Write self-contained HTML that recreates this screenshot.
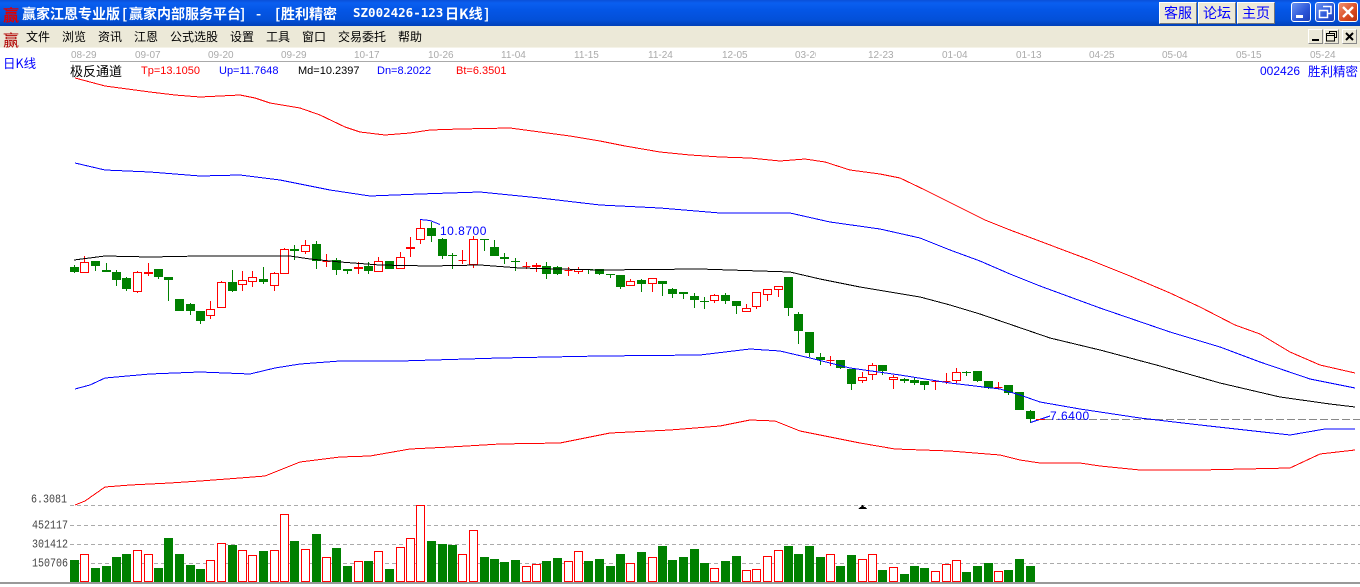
<!DOCTYPE html>
<html><head><meta charset="utf-8"><style>
html,body{margin:0;padding:0;background:#fff;width:1360px;height:587px;overflow:hidden}
body{position:relative;font-family:"Liberation Sans","WenQuanYi Zen Hei","Noto Sans CJK SC",sans-serif}
.a{position:absolute;white-space:pre;line-height:1}
#tb{position:absolute;left:0;top:0;width:1360px;height:26px;background:linear-gradient(#0a4fd8 0,#0a5ff0 3px,#0456e6 10px,#0350d8 20px,#0240b8 26px)}
#mb{position:absolute;left:0;top:26px;width:1360px;height:21px;background:#ECE9D8;border-bottom:1px solid #f5f3e8}
.t{color:#fff;font:bold 14px "WenQuanYi Zen Hei","Noto Sans CJK SC",sans-serif;top:4px}
.tm{color:#fff;font:bold 12.5px "DejaVu Sans Mono",monospace;top:5px}
.m{color:#000;font:12px "WenQuanYi Zen Hei","Noto Sans CJK SC",sans-serif;top:28px}
.b{position:absolute;top:2px;width:36px;height:20px;background:#ECE9D8;border:1px solid;border-color:#fff #777 #777 #fff;color:#00f;font:14px/20px "WenQuanYi Zen Hei","Noto Sans CJK SC",sans-serif;text-align:center}
.x{position:absolute;top:2px;width:18px;height:18px;border:1px solid #fff;border-radius:3px;background:linear-gradient(135deg,#6d94f2,#2a55d8 60%,#1c3fb8)}
.d{position:absolute;top:29px;width:15px;height:15px;background:#ECE9D8;border:1px solid;border-color:#fff #888 #888 #fff;box-sizing:border-box}
.tk{color:#aaa;font:10px "Liberation Sans",sans-serif;top:50px}
.p{font:11px "Liberation Sans",sans-serif;top:65px}
.l{color:#444;font:10px "Liberation Mono",monospace;transform-origin:left top;transform:scaleY(1.2)}
</style></head><body>
<div id="tb"></div>
<div class="a" style="left:3px;top:2px;color:#e00000;font:bold 16px 'WenQuanYi Zen Hei','Noto Sans CJK SC',sans-serif">赢</div>
<div class="a t" style="left:22px">赢家江恩专业版</div>
<div class="a t" style="left:122px">[</div>
<div class="a t" style="left:129px">赢家内部服务平台</div>
<div class="a t" style="left:240px">]</div>
<div class="a t" style="left:256px">-</div>
<div class="a t" style="left:275px">[</div>
<div class="a t" style="left:281px">胜利精密</div>
<div class="a tm" style="left:353px">SZ002426-123</div>
<div class="a t" style="left:445px">日K线</div>
<div class="a t" style="left:484px">]</div>
<div class="b" style="left:1159px">客服</div>
<div class="b" style="left:1198px">论坛</div>
<div class="b" style="left:1237px">主页</div>
<div class="x" style="left:1291px"><div style="position:absolute;left:4px;top:12px;width:7px;height:3px;background:#fff"></div></div>
<div class="x" style="left:1315px"><svg width="18" height="18" style="position:absolute;left:0;top:0"><path d="M7 3.5h8v7h-3M3.500 7.500h8v7h-8z" fill="none" stroke="#fff" stroke-width="1.5"/></svg></div>
<div class="x" style="left:1338px;background:linear-gradient(135deg,#f09070,#d84a20 60%,#b83010)"><svg width="18" height="18" style="position:absolute;left:0;top:0"><path d="M4 4L14 14M14 4L4 14" stroke="#fff" stroke-width="2.4"/></svg></div>
<div id="mb"></div>
<div class="a" style="left:3px;top:27px;color:#b00000;font:16px 'WenQuanYi Zen Hei','Noto Sans CJK SC',sans-serif">赢</div>
<div class="a m" style="left:26px">文件</div>
<div class="a m" style="left:62px">浏览</div>
<div class="a m" style="left:98px">资讯</div>
<div class="a m" style="left:134px">江恩</div>
<div class="a m" style="left:170px">公式选股</div>
<div class="a m" style="left:230px">设置</div>
<div class="a m" style="left:266px">工具</div>
<div class="a m" style="left:302px">窗口</div>
<div class="a m" style="left:338px">交易委托</div>
<div class="a m" style="left:398px">帮助</div>
<div class="d" style="left:1308px"><div style="position:absolute;left:3px;top:9px;width:7px;height:2px;background:#000"></div></div>
<div class="d" style="left:1324px"><svg width="13" height="13" style="position:absolute;left:0;top:0"><path d="M4.500 3.500V1.500h7v6h-2M1.500 3.500h8v2h-8zM1.500 5v6h8V5" fill="none" stroke="#000"/></svg></div>
<div class="d" style="left:1342px"><svg width="13" height="13" style="position:absolute;left:0;top:0"><path d="M3 3L10 10M10 3L3 10" stroke="#000" stroke-width="2"/></svg></div>

<div class="a tk" style="left:71px">08-29</div>
<div class="a tk" style="left:135px">09-07</div>
<div class="a tk" style="left:208px">09-20</div>
<div class="a tk" style="left:281px">09-29</div>
<div class="a tk" style="left:354px">10-17</div>
<div class="a tk" style="left:428px">10-26</div>
<div class="a tk" style="left:501px">11-04</div>
<div class="a tk" style="left:574px">11-15</div>
<div class="a tk" style="left:648px">11-24</div>
<div class="a tk" style="left:722px">12-05</div>
<div class="a tk" style="left:795px;width:21px;overflow:hidden">03-20</div>
<div class="a tk" style="left:868px">12-23</div>
<div class="a tk" style="left:942px">01-04</div>
<div class="a tk" style="left:1016px">01-13</div>
<div class="a tk" style="left:1089px">04-25</div>
<div class="a tk" style="left:1162px">05-04</div>
<div class="a tk" style="left:1236px">05-15</div>
<div class="a tk" style="left:1310px">05-24</div>

<div class="a" style="left:3px;top:53px;color:#00f;font:12.5px 'WenQuanYi Zen Hei','Noto Sans CJK SC',sans-serif">日K线</div>
<div class="a" style="left:70px;top:61px;color:#000;font:13px 'WenQuanYi Zen Hei','Noto Sans CJK SC',sans-serif">极反通道</div>
<div class="a p" style="left:141px;color:#f00">Tp=13.1050</div>
<div class="a p" style="left:219px;color:#00f">Up=11.7648</div>
<div class="a p" style="left:298px;color:#000">Md=10.2397</div>
<div class="a p" style="left:377px;color:#00f">Dn=8.2022</div>
<div class="a p" style="left:456px;color:#f00">Bt=6.3501</div>
<div class="a" style="left:1260px;top:64px;color:#00f;font:12px 'Liberation Sans',sans-serif">002426</div>
<div class="a" style="left:1308px;top:61px;color:#00f;font:12.5px 'WenQuanYi Zen Hei','Noto Sans CJK SC',sans-serif">胜利精密</div>

<div class="a l" style="left:31px;top:494px">6.3081</div>
<div class="a l" style="left:32px;top:520px">452117</div>
<div class="a l" style="left:32px;top:539px">301412</div>
<div class="a l" style="left:32px;top:558px">150706</div>

<svg width="1360" height="587" style="position:absolute;left:0;top:0" shape-rendering="crispEdges">
<path d="M70 61.500H1360" stroke="#aaa" fill="none"/>
<path d="M70 505.500H1360M70 525.500H1360M70 544.500H1360M70 563.500H1360" stroke="#aaa" stroke-dasharray="4 3" fill="none"/>
<path d="M1045 419.500H1360" stroke="#888" stroke-dasharray="8 3" fill="none"/>
<path d="M858 509h9l-2-2h-1l-1-2h-1l-1 2h-1z" fill="#000"/>
<rect x="0" y="582" width="1360" height="2" fill="#999"/>
<path fill="#008000" d="M70 560h9v22h-9zM91 568h9v14h-9zM102 566h9v16h-9zM112 557h9v25h-9zM122 554h9v28h-9zM154 568h9v14h-9zM164 538h9v44h-9zM175 554h9v28h-9zM186 565h9v17h-9zM196 569h9v13h-9zM228 545h9v37h-9zM259 551h9v31h-9zM290 541h9v41h-9zM312 534h9v48h-9zM332 548h9v34h-9zM343 566h9v16h-9zM364 561h9v21h-9zM385 569h9v13h-9zM427 541h9v41h-9zM438 544h9v38h-9zM448 545h9v37h-9zM480 557h9v25h-9zM490 559h9v23h-9zM500 562h9v20h-9zM511 560h9v22h-9zM542 561h9v21h-9zM553 558h9v24h-9zM584 561h9v21h-9zM595 559h9v23h-9zM606 566h9v16h-9zM616 554h9v28h-9zM637 552h9v30h-9zM658 546h9v36h-9zM668 560h9v22h-9zM679 557h9v25h-9zM690 549h9v33h-9zM700 563h9v19h-9zM721 561h9v21h-9zM732 556h9v26h-9zM784 546h9v36h-9zM794 554h9v28h-9zM805 546h9v36h-9zM816 557h9v25h-9zM836 566h9v16h-9zM847 555h9v27h-9zM878 570h9v12h-9zM900 574h9v8h-9zM910 566h9v16h-9zM920 568h9v14h-9zM962 572h9v10h-9zM973 566h9v16h-9zM984 563h9v19h-9zM1004 570h9v12h-9zM1015 559h9v23h-9zM1026 566h9v16h-9z"/>
<path fill="#fff" stroke="#f00" d="M80.500 554.500h8V581.500h-8zM133.500 550.500h8V581.500h-8zM144.500 554.500h8V581.500h-8zM206.500 560.500h8V581.500h-8zM217.500 543.500h8V581.500h-8zM238.500 550.500h8V581.500h-8zM248.500 555.500h8V581.500h-8zM270.500 550.500h8V581.500h-8zM280.500 514.500h8V581.500h-8zM301.500 549.500h8V581.500h-8zM322.500 557.500h8V581.500h-8zM354.500 561.500h8V581.500h-8zM374.500 551.500h8V581.500h-8zM396.500 547.500h8V581.500h-8zM406.500 538.500h8V581.500h-8zM416.500 505.500h8V581.500h-8zM458.500 554.500h8V581.500h-8zM469.500 530.500h8V581.500h-8zM522.500 566.500h8V581.500h-8zM532.500 564.500h8V581.500h-8zM564.500 561.500h8V581.500h-8zM574.500 551.500h8V581.500h-8zM626.500 563.500h8V581.500h-8zM648.500 557.500h8V581.500h-8zM710.500 568.500h8V581.500h-8zM742.500 570.500h8V581.500h-8zM752.500 569.500h8V581.500h-8zM763.500 556.500h8V581.500h-8zM774.500 550.500h8V581.500h-8zM826.500 554.500h8V581.500h-8zM858.500 559.500h8V581.500h-8zM868.500 554.500h8V581.500h-8zM889.500 567.500h8V581.500h-8zM931.500 571.500h8V581.500h-8zM942.500 564.500h8V581.500h-8zM952.500 560.500h8V581.500h-8zM994.500 571.500h8V581.500h-8z"/>
<path fill="none" stroke="#008000" d="M74.500 265V273M95.500 261V271M106.500 263V272M116.500 270V286M126.500 277V291M158.500 269V279M168.500 277V301M190.500 303V315M200.500 311V324M232.500 270V292M263.500 267V284M294.500 245V260M316.500 241V269M336.500 258V275M347.500 269V274M368.500 262V274M431.500 222V242M442.500 238V259M452.500 253V269M484.500 239V251M494.500 240V256M504.500 253V264M515.500 258V271M546.500 262V279M557.500 266V275M599.500 269V275M588.500 269V274M610.500 274V278M620.500 275V289M641.500 279V292M662.500 281V296M672.500 288V298M683.500 292V299M694.500 293V308M704.500 297V309M725.500 293V304M736.500 301V314M788.500 277V316M798.500 312V344M809.500 332V357M820.500 353V365M840.500 360V369M851.500 369V390M882.500 365V375M904.500 378V383M914.500 377V385M924.500 381V390M966.500 371V376M977.500 371V382M988.500 381V389M1008.500 385V395M1019.500 392V410M1030.500 410V423"/>
<path fill="#008000" d="M70 267h9v5h-9zM91 261h9v5h-9zM102 270h9v2h-9zM112 272h9v8h-9zM122 278h9v11h-9zM154 269h9v8h-9zM164 277h9v3h-9zM175 299h9v12h-9zM186 304h9v7h-9zM196 311h9v10h-9zM228 282h9v9h-9zM259 279h9v3h-9zM290 249h9v2h-9zM312 244h9v17h-9zM332 260h9v10h-9zM343 269h9v2h-9zM364 266h9v5h-9zM385 261h9v8h-9zM427 228h9v8h-9zM438 239h9v17h-9zM448 255h9v1h-9zM480 239h9v1h-9zM490 247h9v9h-9zM500 257h9v2h-9zM511 261h9v1h-9zM542 266h9v8h-9zM553 267h9v7h-9zM584 269h9v1h-9zM595 269h9v5h-9zM606 274h9v1h-9zM616 275h9v12h-9zM637 280h9v4h-9zM658 281h9v3h-9zM668 289h9v5h-9zM679 292h9v2h-9zM690 296h9v4h-9zM700 301h9v1h-9zM721 295h9v6h-9zM732 301h9v5h-9zM784 277h9v31h-9zM794 314h9v17h-9zM805 332h9v21h-9zM816 357h9v3h-9zM836 360h9v8h-9zM847 369h9v15h-9zM878 365h9v6h-9zM900 379h9v2h-9zM910 380h9v3h-9zM920 381h9v4h-9zM962 372h9v1h-9zM973 371h9v10h-9zM984 381h9v7h-9zM1004 385h9v8h-9zM1015 392h9v18h-9zM1026 411h9v8h-9z"/>
<path fill="none" stroke="#f00" d="M84.500 256V262M137.500 271V293M148.500 263V276M210.500 301V319M221.500 281V283M242.500 271V291M252.500 271V287M274.500 272V291M284.500 248V250M305.500 240V254M326.500 254V267M358.500 262V274M378.500 257V261M400.500 252V257M410.500 237V257M420.500 219V244M462.500 250V264M473.500 236V268M526.500 262V269M536.500 263V272M568.500 267V276M578.500 267V274M630.500 279V281M652.500 278V292M714.500 294V303M746.500 304V308M756.500 292V309M767.500 289V301M778.500 286V297M830.500 356V366M862.500 372V383M872.500 363V380M893.500 375V389M935.500 381V390M946.500 373V384M956.500 368V383M998.500 382V389"/>
<path fill="#fff" stroke="#f00" d="M80.500 262.500h8V272.500h-8zM133.500 272.500h8V291.500h-8zM144.500 272.500h8V273.500h-8zM206.500 309.500h8V315.500h-8zM217.500 282.500h8V307.500h-8zM238.500 280.500h8V284.500h-8zM248.500 277.500h8V281.500h-8zM270.500 273.500h8V285.500h-8zM280.500 249.500h8V273.500h-8zM301.500 245.500h8V251.500h-8zM322.500 261.500h8V261.500h-8zM354.500 267.500h8V268.500h-8zM374.500 261.500h8V271.500h-8zM396.500 257.500h8V268.500h-8zM406.500 247.500h8V248.500h-8zM416.500 228.500h8V239.500h-8zM458.500 260.500h8V260.500h-8zM469.500 239.500h8V264.500h-8zM522.500 266.500h8V266.500h-8zM532.500 265.500h8V266.500h-8zM564.500 270.500h8V270.500h-8zM574.500 269.500h8V271.500h-8zM626.500 281.500h8V285.500h-8zM648.500 278.500h8V283.500h-8zM710.500 295.500h8V300.500h-8zM742.500 308.500h8V311.500h-8zM752.500 292.500h8V306.500h-8zM763.500 289.500h8V294.500h-8zM774.500 286.500h8V289.500h-8zM826.500 360.500h8V360.500h-8zM858.500 377.500h8V380.500h-8zM868.500 365.500h8V374.500h-8zM889.500 377.500h8V379.500h-8zM931.500 381.500h8V381.500h-8zM942.500 381.500h8V381.500h-8zM952.500 372.500h8V380.500h-8zM994.500 387.500h8V387.500h-8z"/>
<g fill="none" stroke-width="1">
<polyline stroke="#f00" points="75,78 90,82 105,86 120,88 150,92 175,95 200,97 240,95 255,98 270,103 300,108 320,115 345,127 360,132 385,135 410,133 430,130 460,129 510,128 540,132 570,136 600,141 625,146 660,152 690,155 720,157 750,158 780,161 805,159 825,162 850,170 880,174 900,178 925,190 955,205 985,220 1010,230 1050,245 1090,260 1130,276 1170,293 1200,307 1235,325 1260,334 1290,352 1320,365 1355,373"/>
<polyline stroke="#00f" points="75,163 105,170 150,172 200,176 240,175 280,180 330,190 370,196 420,194 480,192 540,198 600,205 660,208 720,213 790,213 830,222 880,229 920,238 950,250 980,261 1010,274 1040,286 1100,308 1170,332 1220,347 1260,362 1310,379 1355,388"/>
<polyline stroke="#000" points="74,260 105,256 150,257 200,256 250,256 290,256 310,259 340,262 380,265 430,266 480,265 520,268 600,270 700,269 790,272 820,279 860,287 920,297 950,305 980,314 1015,326 1050,338 1100,350 1160,366 1220,383 1280,397 1330,404 1355,407"/>
<polyline stroke="#00f" points="75,389 90,385 105,378 150,374 200,372 250,374 275,368 300,364 340,361 400,361 500,358 600,356 700,355 750,349 780,351 810,358 850,368 900,375 950,383 1000,389 1020,395 1040,402 1080,409 1140,418 1200,425 1290,435 1325,429 1355,429"/>
<polyline stroke="#f00" points="75,505 85,501 105,487 130,485 170,483 200,481 240,478 265,476 285,468 300,462 340,457 370,456 410,449 450,447 500,444 560,443 610,433 670,430 720,426 750,420 775,421 800,431 830,437 860,443 895,449 950,451 1000,455 1020,460 1040,463 1080,463 1100,466 1140,470 1200,470 1290,468 1305,461 1320,454 1355,450"/>
<path stroke="#00f" d="M420 219.500L430 220.500L440 224.500M1030.500 422.500L1050 416"/>
<path stroke="#f00" d="M1036 419.500H1045"/>
</g>
<text x="440" y="235" font-family="Liberation Sans,sans-serif" font-size="12" fill="#00f" letter-spacing=".5">10.8700</text>
<text x="1050" y="420" font-family="Liberation Sans,sans-serif" font-size="12" fill="#00f" letter-spacing=".5">7.6400</text>
</svg>
</body></html>
